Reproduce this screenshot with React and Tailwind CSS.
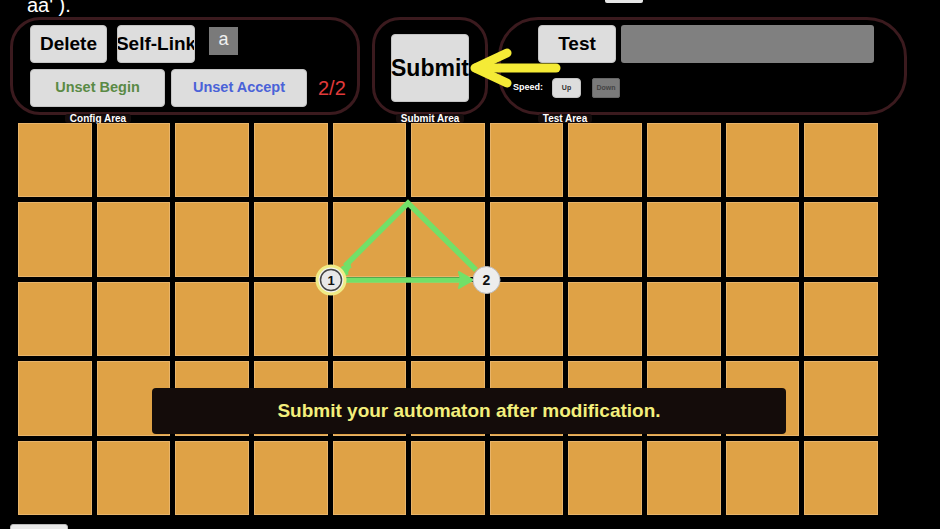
import React from "react";

const font = { fontFamily: '"Liberation Sans", Arial, sans-serif' };

function Btn({ className = "", children }) {
  return (
    <div
      className={
        "flex items-center justify-center bg-[#dddddd] border border-[#c4c4c4] rounded-[4px] font-bold whitespace-nowrap overflow-hidden " +
        className
      }
    >
      {children}
    </div>
  );
}

export default function App() {
  const cells = Array.from({ length: 55 });
  return (
    <div
      className="relative w-[940px] h-[529px] bg-black overflow-hidden text-white"
      style={font}
    >
      {/* top strip */}
      <div className="flex h-[17px] overflow-hidden">
        <div className="w-[605px] pl-[27px] text-[20px] leading-[20px] -mt-[5px] text-white">
          aa' ).
        </div>
        <div className="w-[38px] h-[3px] bg-[#e6e6e6] rounded-b-[2px]" />
      </div>

      {/* panels */}
      <div className="flex h-[98px] pl-[10px]">
        {/* Config */}
        <div className="w-[350px] h-[98px] border-[3px] border-[#3b1a1e] rounded-[30px] pl-[17px] pt-[5px]">
          <div className="flex items-start">
            <Btn className="w-[77px] h-[38px] text-[19px] text-black">Delete</Btn>
            <Btn className="ml-[10px] w-[78px] h-[38px] text-[19px] text-black">Self-Link</Btn>
            <div className="ml-[14px] mt-[2px] w-[29px] h-[28px] bg-[#7a7a7a] flex justify-center text-[18px] leading-[24px] text-[#f0f0f0]">
              a
            </div>
          </div>
          <div className="flex items-start mt-[6px]">
            <Btn className="w-[135px] h-[38px] text-[14.5px] text-[#5a8a45]">Unset Begin</Btn>
            <Btn className="ml-[6px] w-[136px] h-[38px] text-[14.5px] text-[#4a62d8]">Unset Accept</Btn>
            <div className="ml-[11px] h-[38px] flex items-center text-[20px] text-[#e03a3a]">2/2</div>
          </div>
        </div>

        {/* Submit */}
        <div className="ml-[12px] w-[116px] h-[98px] border-[3px] border-[#3b1a1e] rounded-[28px] flex justify-center pt-[14px]">
          <Btn className="w-[78px] h-[68px] text-[23px] text-black overflow-visible">Submit</Btn>
        </div>

        {/* Test */}
        <div className="ml-[10px] w-[409px] h-[98px] border-[3px] border-[#3b1a1e] rounded-[40px] pl-[37px] pt-[5px]">
          <div className="flex items-start">
            <Btn className="w-[78px] h-[38px] text-[19px] text-black">Test</Btn>
            <div className="ml-[5px] w-[253px] h-[38px] bg-[#808080] rounded-[3px]" />
          </div>
          <div className="flex items-center mt-[15px] -ml-[25px]">
            <span className="text-[9px] font-bold text-white w-[32px]">Speed:</span>
            <Btn className="ml-[7px] w-[29px] h-[20px] text-[7px] text-[#333] rounded-[2px]">Up</Btn>
            <div className="ml-[11px] w-[28px] h-[20px] bg-[#7a7a7a] border border-[#666] rounded-[2px] flex items-center justify-center text-[7px] font-bold text-[#444]">
              Down
            </div>
          </div>
        </div>
      </div>

      {/* labels */}
      <div className="flex h-[9px] -mt-[1px] text-[10px] leading-[9px] font-bold text-white">
        <div className="ml-[48px] w-[100px] flex justify-center">
          <span className="bg-[#140c0c] px-[5px] rounded-[3px]">Config Area</span>
        </div>
        <div className="ml-[232px] w-[100px] flex justify-center">
          <span className="bg-[#140c0c] px-[5px] rounded-[3px]">Submit Area</span>
        </div>
        <div className="ml-[35px] w-[100px] flex justify-center">
          <span className="bg-[#140c0c] px-[5px] rounded-[3px]">Test Area</span>
        </div>
      </div>

      {/* grid */}
      <div className="ml-[18px] w-[860px] h-[392px] grid grid-cols-11 grid-rows-5 gap-[5px]">
        {cells.map((_, i) => (
          <div key={i} className="bg-[#dfa246] border border-[#e8b46a]" />
        ))}
      </div>

      {/* bottom partial button */}
      <div className="mt-[9px] ml-[10px] w-[58px] h-[6px] bg-[#e9e9e9] border border-[#bbb] rounded-t-[3px]" />

      {/* graph + arrow overlay */}
      <svg
        className="absolute left-0 top-0 pointer-events-none"
        width="940"
        height="529"
        viewBox="0 0 940 529"
      >
        <polyline
          points="476,270 408,203 345,266"
          fill="none"
          stroke="#72e068"
          strokeWidth="5.5"
          strokeLinejoin="miter"
        />
        <polyline
          points="347,275 343,268 351,266"
          fill="#72e068"
          stroke="#72e068"
          strokeWidth="4"
          strokeLinejoin="round"
        />
        <line x1="346" y1="280" x2="470" y2="280" stroke="#72e068" strokeWidth="5.5" />
        <polygon points="473,280 459,272 461,280 459,288" fill="#72e068" stroke="#72e068" strokeWidth="2" strokeLinejoin="round" />

        <circle cx="331" cy="280" r="15.5" fill="#f0ec86" />
        <circle cx="331" cy="280" r="12.5" fill="#f5f5f0" />
        <circle cx="331" cy="280" r="10.5" fill="#e8e8e8" stroke="#444" strokeWidth="1.5" />
        <text x="331" y="285" textAnchor="middle" fontSize="13" fontWeight="bold" fill="#111" style={font}>
          1
        </text>

        <circle cx="486.5" cy="280" r="13.5" fill="#ededed" stroke="#bdbdbd" strokeWidth="1" />
        <text x="486.5" y="285" textAnchor="middle" fontSize="14" fontWeight="bold" fill="#111" style={font}>
          2
        </text>

        <g stroke="#f5eb36" strokeWidth="9" strokeLinecap="round" strokeLinejoin="round" fill="none">
          <line x1="556" y1="68" x2="476" y2="68" />
          <polyline points="507,53 475,68 507,83" />
        </g>
      </svg>

      {/* toast */}
      <div className="absolute left-[152px] top-[388px] w-[634px] h-[46px] bg-[#140c0a] rounded-[4px] flex items-center justify-center text-[19px] font-bold text-[#f3ef7c]">
        Submit your automaton after modification.
      </div>
    </div>
  );
}
